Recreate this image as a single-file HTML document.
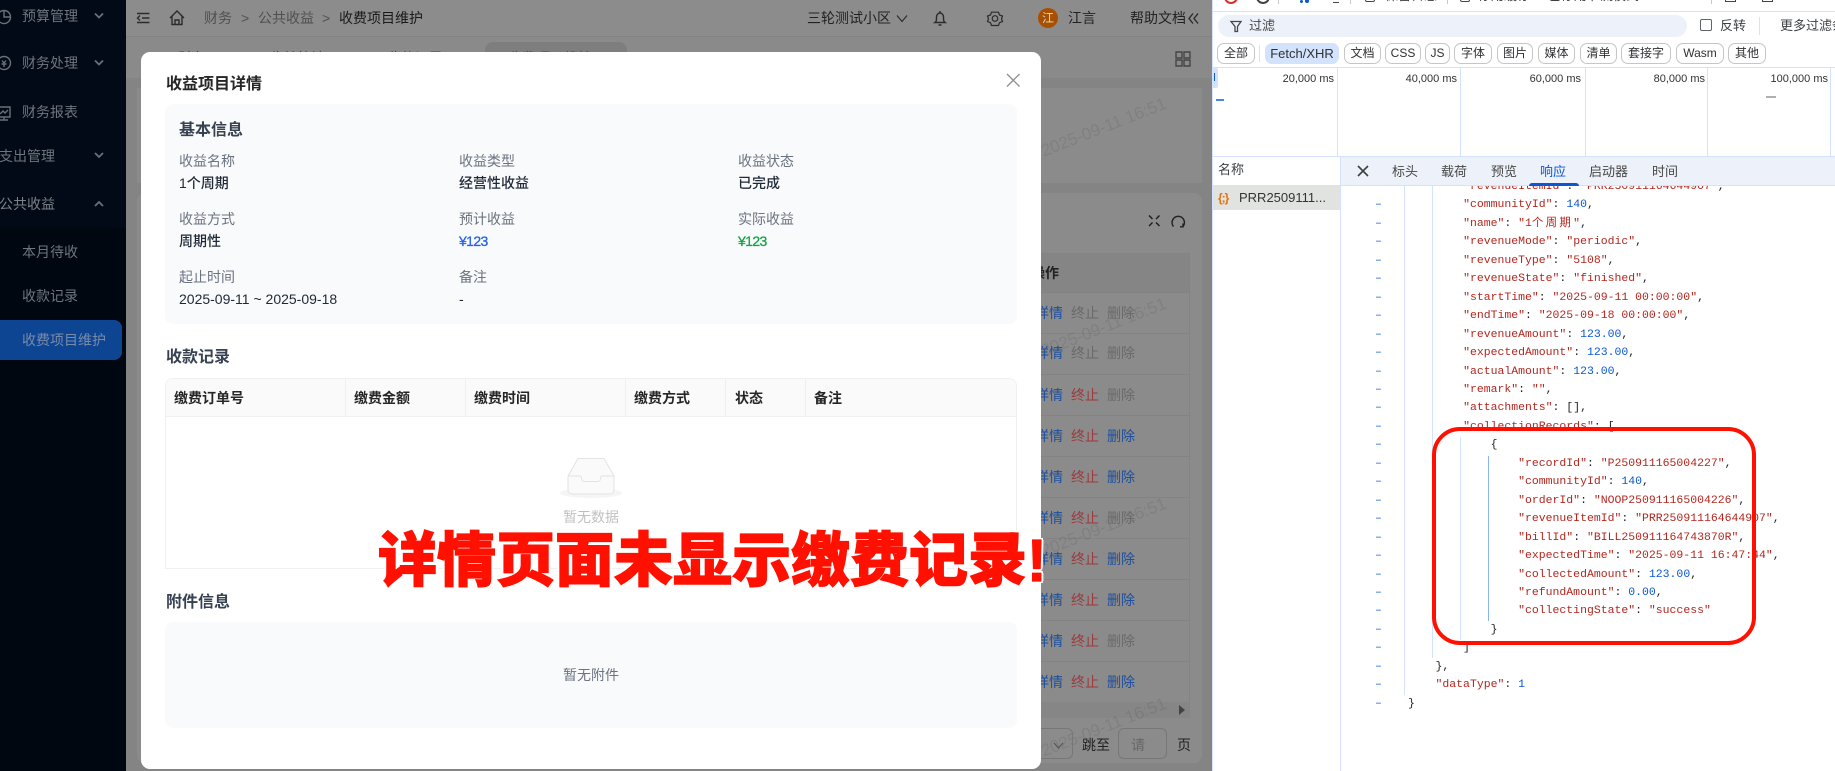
<!DOCTYPE html>
<html lang="zh-CN"><head><meta charset="utf-8"><title>收益项目详情</title>
<style>
*{box-sizing:border-box;margin:0;padding:0}
html,body{width:1835px;height:771px;overflow:hidden;background:#fff}
body{position:relative;font-family:"Liberation Sans","Noto Sans CJK SC",sans-serif;font-size:14px}
.a{position:absolute}
.t{position:absolute;white-space:nowrap;line-height:20px}
svg{position:absolute;overflow:visible}
.side{color:#6f757d}
.l{color:#6b7280}
.v{color:#1f2937;font-weight:500}
.h{font-weight:700;color:#374151;font-size:16px;line-height:22px}
.th{font-weight:700;color:#262626}
.o{color:#1c4f9e}.r{color:#9c3a3d}.g{color:#6a6a6a}.b{color:#1c4f9e}
.wm{position:absolute;left:1042px;font-size:17px;line-height:20px;color:rgba(0,0,0,.08);transform:rotate(-21.5deg);transform-origin:0 50%;white-space:nowrap}
.chip{position:absolute;top:43px;height:21px;border:1px solid #c4c7c5;border-radius:7px;font-size:12px;line-height:19px;text-align:center;color:#303134;background:#fff}
.dt{position:absolute;color:#3c4043;font-size:13px;line-height:18px;white-space:nowrap}
.ms{position:absolute;top:70px;font-size:11px;line-height:18px;color:#303134;white-space:nowrap}
.gl{position:absolute;top:68px;height:88px;width:1px;background:#d3e3fd}
.code{position:absolute;left:67px;top:-8px;font:11.47px/18.46px "Liberation Mono","Noto Sans CJK SC",monospace;white-space:pre;color:#1f1f1f}
.code i{font-style:normal;color:#b3261e}.code u{text-decoration:none;color:#0b57d0}
.gut{position:absolute;left:34px;top:-8px;font:11.43px/18.46px "Liberation Mono",monospace;white-space:pre;color:#1a5fd0}
.big{position:absolute;left:378px;top:531px;font-family:"Liberation Sans","Noto Sans CJK SC",sans-serif;font-size:59px;line-height:60px;font-weight:900;color:#ff1000;white-space:nowrap;-webkit-text-stroke:1.2px #ff1000;text-shadow:2.500px 0 0 #fff,-2.500px 0 0 #fff,0 2.500px 0 #fff,0 -2.500px 0 #fff,2px 2px 0 #fff,-2px 2px 0 #fff,2px -2px 0 #fff,-2px -2px 0 #fff}
</style></head><body>

<!-- sidebar -->
<div class="a" style="left:0;top:0;width:126px;height:771px;background:#010a16"></div>
<div class="a" style="left:0;top:228px;width:126px;height:543px;background:#000710"></div>
<div class="a" style="left:0;top:320px;width:122px;height:40px;background:#0e4593;border-radius:0 8px 8px 0"></div>
<div class="t side" style="left:22px;top:6px">预算管理</div>
<div class="t side" style="left:22px;top:53px">财务处理</div>
<div class="t side" style="left:22px;top:102px">财务报表</div>
<div class="t side" style="left:-1px;top:146px">支出管理</div>
<div class="t" style="left:-1px;top:194px;color:#7d8288">公共收益</div>
<div class="t side" style="left:22px;top:242px">本月待收</div>
<div class="t side" style="left:22px;top:286px">收款记录</div>
<div class="t" style="left:22px;top:330px;color:#7a8ba8">收费项目维护</div>
<svg style="left:0;top:0" width="126" height="240" fill="none" stroke="#6a7078" stroke-width="1.4">
<circle cx="4" cy="17" r="6.5"/><path d="M4 10.5V17H10.5"/>
<circle cx="4" cy="63" r="6.5"/><path d="M2 60.5l2 2.5 2-2.5M1.5 64h5M4 63v4"/>
<path d="M-2 107H10V117H-2M4 117v3M-1 120h9M0 114l3-3 2 2 3-3"/>
<path d="M95 13.5l4 4 4-4M95 60.5l4 4 4-4M95 153l4 4 4-4M95 206l4-4 4 4" stroke-width="1.8"/>
</svg>

<!-- main dimmed page -->
<div class="a" style="left:126px;top:0;width:1086px;height:771px;background:#848484"></div>
<div class="a" style="left:126px;top:0;width:1086px;height:37px;background:#8c8c8c;border-bottom:1px solid #838383"></div>
<div class="a" style="left:126px;top:37px;width:1086px;height:41px;background:#8a8a8a"></div>
<div class="a" style="left:485px;top:42px;width:142px;height:36px;background:#7e7e7e;border-radius:8px 8px 0 0"></div>
<div class="t" style="left:178px;top:48px;color:#444">财务</div>
<div class="t" style="left:269px;top:48px;color:#444">收益统计</div>
<div class="t" style="left:387px;top:48px;color:#444">收款记录</div>
<div class="t" style="left:508px;top:48px;color:#1c4f9e">收费项目维护</div>
<div class="a" style="left:137px;top:88px;width:1065px;height:95px;background:#8b8b8b"></div>
<div class="a" style="left:137px;top:193px;width:1065px;height:570px;background:#8b8b8b;border-radius:8px"></div>
<div class="a" style="left:150px;top:253px;width:1040px;height:40px;background:#858585;border:1px solid #838383"></div>
<div class="a" style="left:150px;top:293px;width:1040px;height:409px;border-right:1px solid #838383;background:repeating-linear-gradient(to bottom,transparent 0,transparent 40px,#838383 40px,#838383 41px)"></div>
<div class="a" style="left:150px;top:702px;width:1040px;height:16px;background:#868686"></div>
<div class="t th" style="left:1031px;top:263px;color:#222">操作</div>
<div class="wm" style="top:142px">2025-09-11 16:51</div>
<div class="wm" style="top:342px">2025-09-11 16:51</div>
<div class="wm" style="top:542px">2025-09-11 16:51</div>
<div class="wm" style="top:742px">2025-09-11 16:51</div>

<!-- topbar and toolbar icons -->
<svg style="left:0;top:0" width="1212" height="771" fill="none" stroke="#2b2b2b" stroke-width="1.4">
<path d="M137 13.5H149.5M142 18H149.5M137 22.5H149.5M140 15.5l-2.500 2.500 2.500 2.500"/>
<path d="M170 18l7-7 7 7M172 16.5V24.5H182V16.5M175 24.5V20h4v4.500"/>
<path d="M897 15.5l5 6 5-6" stroke-width="1.2"/>
<path d="M935 22.5c1.5-1 1.5-2.500 1.500-5.500a3.500 4 0 0 1 7 0c0 3 0 4.500 1.500 5.500zM938.5 25h3M940 11v1.500"/>
<path d="M991.5 12.2h7l1 2.800 3 1-1 3 1 2.500-3 1.200-1 2.800h-7l-1-2.800-3-1.200 1-2.500-1-3 3-1z" stroke-width="1.2"/><circle cx="995" cy="18.500" r="2.800" stroke-width="1.2"/>
<path d="M1193 13.5l-4 5 4 5M1198 13.5l-4 5 4 5"/>
<path d="M1176 52h6v6h-6zM1184 52h6v6h-6zM1176 60h6v6h-6zM1184 60h6v6h-6z" stroke="#454545"/>
<path d="M1149 215.5l3.500 3.500M1159.5 215.5l-3.500 3.500M1149 226l3.500-3.500M1159.5 226l-3.500-3.500" stroke="#1a1a1a"/>
<path d="M1173.5 226.5a6.200 6.200 0 1 1 9.500 0M1183 223.5v3.300h-3" stroke="#222"/>
<path d="M1054 743l4.500 5 4.500-5" stroke="#555" stroke-width="1.2"/>
<path d="M1179 705l6 5-6 5z" fill="#444" stroke="none"/>
</svg>
<div class="t" style="left:204px;top:8px;color:#505050">财务</div>
<div class="t" style="left:241px;top:8px;color:#505050">&gt;</div>
<div class="t" style="left:258px;top:8px;color:#505050">公共收益</div>
<div class="t" style="left:322px;top:8px;color:#505050">&gt;</div>
<div class="t" style="left:339px;top:8px;color:#1a1a1a">收费项目维护</div>
<div class="t" style="left:807px;top:8px;color:#222">三轮测试小区</div>
<div class="a" style="left:1038px;top:8px;width:20px;height:20px;border-radius:50%;background:#a84f00;color:#ddd;font-size:12px;line-height:20px;text-align:center">江</div>
<div class="t" style="left:1068px;top:8px;color:#222">江言</div>
<div class="t" style="left:1130px;top:8px;color:#222">帮助文档</div>

<!-- behind-modal row actions -->
<div class="t o" style="left:1035px;top:303px">详情</div><div class="t g" style="left:1071px;top:303px">终止</div><div class="t g" style="left:1107px;top:303px">删除</div>
<div class="t o" style="left:1035px;top:343px">详情</div><div class="t g" style="left:1071px;top:343px">终止</div><div class="t g" style="left:1107px;top:343px">删除</div>
<div class="t o" style="left:1035px;top:385px">详情</div><div class="t r" style="left:1071px;top:385px">终止</div><div class="t g" style="left:1107px;top:385px">删除</div>
<div class="t o" style="left:1035px;top:426px">详情</div><div class="t r" style="left:1071px;top:426px">终止</div><div class="t b" style="left:1107px;top:426px">删除</div>
<div class="t o" style="left:1035px;top:467px">详情</div><div class="t r" style="left:1071px;top:467px">终止</div><div class="t b" style="left:1107px;top:467px">删除</div>
<div class="t o" style="left:1035px;top:508px">详情</div><div class="t r" style="left:1071px;top:508px">终止</div><div class="t g" style="left:1107px;top:508px">删除</div>
<div class="t o" style="left:1035px;top:549px">详情</div><div class="t r" style="left:1071px;top:549px">终止</div><div class="t b" style="left:1107px;top:549px">删除</div>
<div class="t o" style="left:1035px;top:590px">详情</div><div class="t r" style="left:1071px;top:590px">终止</div><div class="t b" style="left:1107px;top:590px">删除</div>
<div class="t o" style="left:1035px;top:631px">详情</div><div class="t r" style="left:1071px;top:631px">终止</div><div class="t g" style="left:1107px;top:631px">删除</div>
<div class="t o" style="left:1035px;top:672px">详情</div><div class="t r" style="left:1071px;top:672px">终止</div><div class="t b" style="left:1107px;top:672px">删除</div>
<div class="a" style="left:1020px;top:728px;width:53px;height:31px;border:1px solid #777;border-radius:6px"></div>
<div class="t" style="left:1082px;top:735px;color:#222">跳至</div>
<div class="a" style="left:1118px;top:728px;width:49px;height:31px;border:1px solid #777;border-radius:6px"></div>
<div class="t" style="left:1131px;top:735px;color:#666">请</div>
<div class="t" style="left:1177px;top:735px;color:#222">页</div>

<!-- modal -->
<div class="a" style="left:141px;top:52px;width:900px;height:717px;background:#fff;border-radius:9px"></div>
<div class="t" style="left:166px;top:74px;font-size:16px;line-height:22px;font-weight:700;color:#262626">收益项目详情</div>
<svg style="left:1006px;top:73px" width="14" height="14" fill="none" stroke="#8c8c8c" stroke-width="1.3"><path d="M1 1L13.500 13.500M13.500 1L1 13.500"/></svg>
<div class="a" style="left:165px;top:104px;width:852px;height:220px;background:#f9fafb;border-radius:8px"></div>
<div class="t h" style="left:179px;top:120px">基本信息</div>
<div class="t l" style="left:179px;top:151px">收益名称</div><div class="t v" style="left:179px;top:173px">1个周期</div>
<div class="t l" style="left:459px;top:151px">收益类型</div><div class="t v" style="left:459px;top:173px">经营性收益</div>
<div class="t l" style="left:738px;top:151px">收益状态</div><div class="t v" style="left:738px;top:173px">已完成</div>
<div class="t l" style="left:179px;top:209px">收益方式</div><div class="t v" style="left:179px;top:231px">周期性</div>
<div class="t l" style="left:459px;top:209px">预计收益</div><div class="t" style="left:459px;top:231px;color:#2563eb;letter-spacing:-.6px;-webkit-text-stroke:.3px #2563eb">¥123</div>
<div class="t l" style="left:738px;top:209px">实际收益</div><div class="t" style="left:738px;top:231px;color:#16a34a;letter-spacing:-.6px;-webkit-text-stroke:.3px #16a34a">¥123</div>
<div class="t l" style="left:179px;top:267px">起止时间</div><div class="t v" style="left:179px;top:289px">2025-09-11 ~ 2025-09-18</div>
<div class="t l" style="left:459px;top:267px">备注</div><div class="t v" style="left:459px;top:289px">-</div>

<div class="t h" style="left:166px;top:347px">收款记录</div>
<div class="a" style="left:165px;top:378px;width:852px;height:191px;border:1px solid #f0f0f0;border-radius:8px 8px 0 0"></div>
<div class="a" style="left:166px;top:379px;width:850px;height:38px;background:#fafafa;border-bottom:1px solid #f0f0f0;border-radius:8px 8px 0 0"></div>
<div class="a" style="left:345px;top:379px;width:1px;height:38px;background:#f0f0f0"></div>
<div class="a" style="left:465px;top:379px;width:1px;height:38px;background:#f0f0f0"></div>
<div class="a" style="left:625px;top:379px;width:1px;height:38px;background:#f0f0f0"></div>
<div class="a" style="left:725px;top:379px;width:1px;height:38px;background:#f0f0f0"></div>
<div class="a" style="left:805px;top:379px;width:1px;height:38px;background:#f0f0f0"></div>
<div class="t th" style="left:174px;top:388px">缴费订单号</div>
<div class="t th" style="left:354px;top:388px">缴费金额</div>
<div class="t th" style="left:474px;top:388px">缴费时间</div>
<div class="t th" style="left:634px;top:388px">缴费方式</div>
<div class="t th" style="left:735px;top:388px">状态</div>
<div class="t th" style="left:814px;top:388px">备注</div>
<svg style="left:0;top:0" width="1040" height="560">
<ellipse cx="591" cy="493" rx="31" ry="5" fill="#f5f5f5"/>
<path d="M568 476L578 458.500H604L614 476V490a4 4 0 0 1-4 4H572a4 4 0 0 1-4-4z" fill="#fafafa" stroke="#e3e3e3" stroke-width="1"/>
<path d="M568 476H580c1 0 1.500 1 1.500 2.500s1 3 3 3h13c2 0 3-1.500 3-3s.5-2.500 1.500-2.500H614" fill="none" stroke="#e3e3e3" stroke-width="1"/>
</svg>
<div class="t" style="left:563px;top:507px;color:rgba(0,0,0,.25)">暂无数据</div>

<div class="t h" style="left:166px;top:592px">附件信息</div>
<div class="a" style="left:165px;top:622px;width:852px;height:106px;background:#f9fafb;border-radius:8px"></div>
<div class="t" style="left:563px;top:665px;color:#6b7280">暂无附件</div>

<!-- devtools -->
<div class="a" style="left:1212px;top:0;width:623px;height:771px;background:#fff;border-left:1px solid #d3e3fd"></div>
<div class="a" style="left:1213px;top:0;width:622px;height:12px;overflow:hidden;border-bottom:1px solid #d3e3fd">
 <div class="a" style="left:11px;top:-10px;width:14px;height:14px;border:2px solid #d93025;border-radius:50%"></div>
 <div class="a" style="left:43px;top:-10px;width:14px;height:14px;border:2px solid #444;border-radius:50%"></div>
 <div class="a" style="left:65px;top:-4px;width:1px;height:8px;background:#c7c7c7"></div>
 <div class="a" style="left:87px;top:0;width:3px;height:3px;background:#0b57d0;border-radius:50%"></div>
 <div class="a" style="left:92px;top:-1px;width:4px;height:4px;background:#0b57d0;border-radius:50%"></div>
 <div class="a" style="left:120px;top:-3px;width:6px;height:6px;border-bottom:1.5px solid #444"></div>
 <div class="a" style="left:137px;top:-4px;width:1px;height:8px;background:#c7c7c7"></div>
 <div class="a" style="left:152px;top:-8px;width:10px;height:10px;border:1px solid #444;border-radius:2px"></div>
 <div class="t" style="left:172px;top:-14px;font-size:13px;color:#3c4043">保留日志</div>
 <div class="a" style="left:234px;top:-4px;width:1px;height:8px;background:#c7c7c7"></div>
 <div class="a" style="left:247px;top:-8px;width:10px;height:10px;border:1px solid #444;border-radius:2px"></div>
 <div class="t" style="left:265px;top:-14px;font-size:13px;color:#3c4043">停用缓存</div>
 <div class="t" style="left:335px;top:-14px;font-size:13px;color:#3c4043">已停用节流模式</div>
 <div class="a" style="left:498px;top:-4px;width:1px;height:8px;background:#c7c7c7"></div>
 <div class="a" style="left:512px;top:-8px;width:11px;height:10px;border:1px solid #444"></div>
 <div class="a" style="left:549px;top:-8px;width:11px;height:10px;border:1px solid #444"></div>
</div>
<div class="a" style="left:1218px;top:15px;width:469px;height:22px;background:#edf1f9;border-radius:11px"></div>
<svg style="left:1230px;top:20px" width="13" height="13" fill="none" stroke="#474747" stroke-width="1.3"><path d="M1 1.500H11L7.500 6.500V11.500H5V6.500z"/></svg>
<div class="dt" style="left:1249px;top:17px;color:#474747">过滤</div>
<div class="a" style="left:1700px;top:19px;width:12px;height:12px;border:1px solid #5f6368;border-radius:2px"></div>
<div class="dt" style="left:1720px;top:17px">反转</div>
<div class="a" style="left:1759px;top:17px;width:1px;height:18px;background:#d3e3fd"></div>
<div class="dt" style="left:1780px;top:17px">更多过滤条件</div>

<div class="chip" style="left:1217px;width:38px">全部</div>
<div class="a" style="left:1259px;top:45px;width:1px;height:17px;background:#d3e3fd"></div>
<div class="chip" style="left:1265px;width:74px;background:#d3e3fd;border-color:#d3e3fd;font-size:13px">Fetch/XHR</div>
<div class="chip" style="left:1344px;width:37px">文档</div>
<div class="chip" style="left:1385px;width:36px">CSS</div>
<div class="chip" style="left:1425px;width:25px">JS</div>
<div class="chip" style="left:1454px;width:38px">字体</div>
<div class="chip" style="left:1497px;width:36px">图片</div>
<div class="chip" style="left:1538px;width:37px">媒体</div>
<div class="chip" style="left:1580px;width:37px">清单</div>
<div class="chip" style="left:1621px;width:50px">套接字</div>
<div class="chip" style="left:1676px;width:48px">Wasm</div>
<div class="chip" style="left:1728px;width:38px">其他</div>

<div class="a" style="left:1213px;top:67px;width:622px;height:1px;background:#d3e3fd"></div>
<div class="a" style="left:1213px;top:156px;width:622px;height:1px;background:#d3e3fd"></div>
<div class="gl" style="left:1337px"></div><div class="gl" style="left:1460px"></div><div class="gl" style="left:1585px"></div><div class="gl" style="left:1707px"></div><div class="gl" style="left:1830px"></div>
<div class="ms" style="right:501px">20,000 ms</div>
<div class="ms" style="right:378px">40,000 ms</div>
<div class="ms" style="right:254px">60,000 ms</div>
<div class="ms" style="right:130px">80,000 ms</div>
<div class="ms" style="right:7px">100,000 ms</div>
<div class="a" style="left:1213px;top:68px;width:5px;height:20px;background:#d3e3fd;border-radius:0 2px 2px 0"></div>
<div class="a" style="left:1214px;top:73px;width:1px;height:8px;background:#0b57d0"></div>
<div class="a" style="left:1216px;top:99px;width:8px;height:2px;background:#4a86e8"></div>
<div class="a" style="left:1766px;top:96px;width:10px;height:2px;background:#b0b0b0"></div>

<div class="a" style="left:1340px;top:157px;width:495px;height:29px;background:#edf1f9;border-bottom:1px solid #d3e3fd"></div>
<div class="a" style="left:1340px;top:157px;width:1px;height:614px;background:#d3e3fd"></div>
<div class="a" style="left:1213px;top:185px;width:127px;height:1px;background:#d3e3fd"></div>
<div class="dt" style="left:1218px;top:161px">名称</div>
<svg style="left:1357px;top:165px" width="12" height="12" fill="none" stroke="#3c4043" stroke-width="1.6"><path d="M1 1L11 11M11 1L1 11"/></svg>
<div class="dt" style="left:1392px;top:163px;color:#474747">标头</div>
<div class="dt" style="left:1441px;top:163px;color:#474747">载荷</div>
<div class="dt" style="left:1491px;top:163px;color:#474747">预览</div>
<div class="dt" style="left:1540px;top:163px;color:#0b57d0">响应</div>
<div class="dt" style="left:1589px;top:163px;color:#474747">启动器</div>
<div class="dt" style="left:1652px;top:163px;color:#474747">时间</div>
<div class="a" style="left:1529px;top:183px;width:50px;height:3px;background:#0b57d0;border-radius:3px 3px 0 0"></div>
<div class="a" style="left:1213px;top:186px;width:127px;height:24px;background:#e1e3e1"></div>
<div class="t" style="left:1218px;top:188px;font-size:12px;font-weight:700;color:#e8710a;line-height:20px;letter-spacing:-1px">{;}</div>
<div class="dt" style="left:1239px;top:189px;color:#333">PRR2509111...</div>

<!-- response body -->
<div class="a" style="left:1341px;top:186px;width:494px;height:585px;overflow:hidden;background:#fff">
 <div class="a" style="left:63px;top:0;width:1px;height:509px;background:#d3e3fd"></div>
 <div class="a" style="left:91px;top:0;width:1px;height:472px;background:#d3e3fd"></div>
 <div class="a" style="left:119px;top:251px;width:1px;height:203px;background:#d3e3fd"></div>
 <div class="a" style="left:147px;top:270px;width:1px;height:165px;background:#8ab4f8"></div>
 <div class="gut">
–
–
–
–
–
–
–
–
–
–
–
–
–
–
–
–
–
–
–
–
–
–
–
–
–
–
–
–</div>
 <div class="code">        <i>"revenueItemId"</i>: <i>"PRR250911164644907"</i>,
        <i>"communityId"</i>: <u>140</u>,
        <i>"name"</i>: <i>"1<span style="letter-spacing:2.29px">个周期</span>"</i>,
        <i>"revenueMode"</i>: <i>"periodic"</i>,
        <i>"revenueType"</i>: <i>"5108"</i>,
        <i>"revenueState"</i>: <i>"finished"</i>,
        <i>"startTime"</i>: <i>"2025-09-11 00:00:00"</i>,
        <i>"endTime"</i>: <i>"2025-09-18 00:00:00"</i>,
        <i>"revenueAmount"</i>: <u>123.00</u>,
        <i>"expectedAmount"</i>: <u>123.00</u>,
        <i>"actualAmount"</i>: <u>123.00</u>,
        <i>"remark"</i>: <i>""</i>,
        <i>"attachments"</i>: [],
        <i>"collectionRecords"</i>: [
            {
                <i>"recordId"</i>: <i>"P250911165004227"</i>,
                <i>"communityId"</i>: <u>140</u>,
                <i>"orderId"</i>: <i>"NOOP250911165004226"</i>,
                <i>"revenueItemId"</i>: <i>"PRR250911164644907"</i>,
                <i>"billId"</i>: <i>"BILL250911164743870R"</i>,
                <i>"expectedTime"</i>: <i>"2025-09-11 16:47:44"</i>,
                <i>"collectedAmount"</i>: <u>123.00</u>,
                <i>"refundAmount"</i>: <u>0.00</u>,
                <i>"collectingState"</i>: <i>"success"</i>
            }
        ]
    },
    <i>"dataType"</i>: <u>1</u>
}</div>
</div>

<!-- red annotations -->
<div class="a" style="left:1432px;top:427px;width:324px;height:218px;border:4px solid #ff1000;border-radius:28px"></div>
<div class="big">详情页面未显示缴费记录!</div>
</body></html>
